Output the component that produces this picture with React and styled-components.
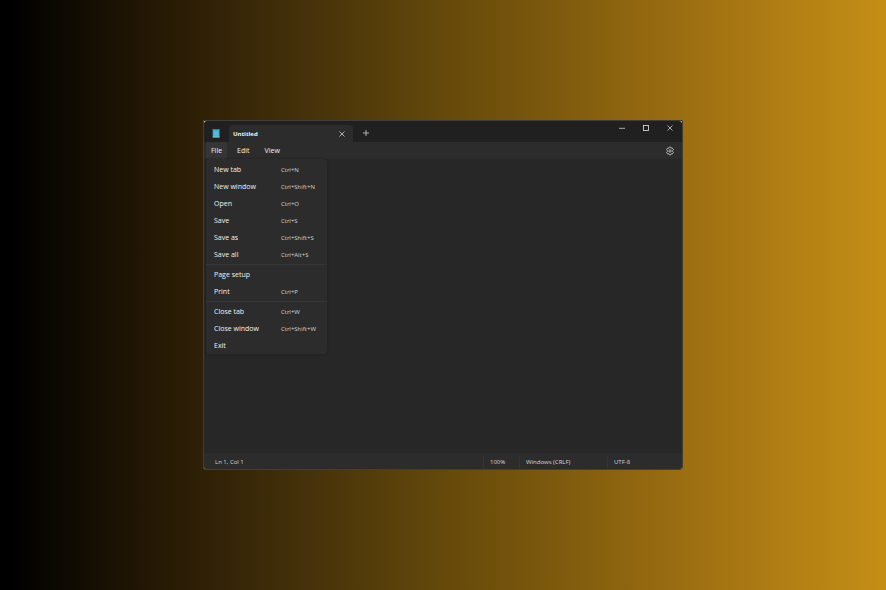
import React from 'react';
import styled, { createGlobalStyle } from 'styled-components';

const GlobalStyle = createGlobalStyle`
  * {
    box-sizing: border-box;
  }

  body {
    margin: 0;
    font-family: 'Open Sans', 'Noto Sans', sans-serif;
    color: #f2f2f2;
  }

  button {
    border: 0;
    padding: 0;
    background: none;
    color: inherit;
    font: inherit;
    cursor: pointer;
  }
`;

const Desktop = styled.div`
  display: flex;
  min-height: 100vh;
  padding: 120px 203px;
  background: linear-gradient(
    to right,
    #000 0%,
    #000 1%,
    #241804 17%,
    #46320a 35%,
    #64490a 50%,
    #845e0e 66%,
    #a57512 82%,
    #c48e16 100%
  );
`;

/* The light background only shows behind the rounded title bar corners */
const Window = styled.main`
  flex: 1;
  display: flex;
  flex-direction: column;
  min-width: 0;
  background-color: #c8c4ba;
  border: 1px solid #403e3a;
  border-radius: 0 0 3px 3px;
  overflow: hidden;
`;

const TitleBar = styled.header`
  display: flex;
  height: 21px;
  background-color: #202020;
  border-radius: 3px 3px 0 0;
`;

const AppIcon = styled.svg`
  flex-shrink: 0;
  width: 8px;
  height: 10px;
  margin: 7px 9px 0 8px;
`;

const Tab = styled.div`
  display: flex;
  align-items: center;
  justify-content: space-between;
  width: 124px;
  height: 17px;
  margin-top: 4px;
  padding: 0 7px 0 4px;
  background-color: #2c2c2c;
  border-radius: 4px 4px 0 0;
  font-size: 6px;
  font-weight: 700;
`;

const GlyphButton = styled.button`
  display: flex;
  align-items: center;
  justify-content: center;
  width: 8px;
  height: 8px;

  svg {
    width: 100%;
    height: 100%;
    fill: none;
    stroke: #d0d0d0;
  }
`;

const NewTabButton = styled(GlyphButton)`
  margin: 8px 0 0 9px;
`;

const WindowControls = styled.div`
  display: flex;
  gap: 16px;
  margin: 3px 8px 0 auto;
`;

const MenuBar = styled.nav`
  position: relative;
  display: flex;
  align-items: center;
  height: 17px;
  padding: 0 7px 0 2px;
  background-color: #2c2c2c;
`;

const MenuButton = styled.button`
  height: 17px;
  margin-right: 5px;
  padding: 1px 5px 0;
  border-radius: 2px;
  background-color: ${({ $open }) => ($open ? '#353535' : 'transparent')};
  font-size: 7px;
  line-height: 16px;
`;

const SettingsButton = styled(GlyphButton)`
  width: 10px;
  height: 10px;
  margin-left: auto;
`;

const Menu = styled.div`
  position: absolute;
  top: 17px;
  left: 2px;
  z-index: 1;
  width: 121px;
  padding-top: 2px;
  background-color: #2c2c2c;
  border-radius: 3px;
  box-shadow: 0 0 2px 1px rgba(0, 0, 0, 0.14);
`;

const MenuItem = styled.button`
  display: flex;
  align-items: center;
  width: 100%;
  height: 17px;
  padding-left: 8px;
  font-size: 7px;
  line-height: 17px;
  text-align: left;
`;

const ItemLabel = styled.span`
  width: 67px;
`;

const Shortcut = styled.span`
  padding-top: 1px;
  color: #d4d4d4;
  font-size: 6px;
  line-height: 16px;
`;

const Divider = styled.hr`
  height: 1px;
  margin: 1px 0;
  border: 0;
  background-color: #363636;
`;

const Editor = styled.textarea`
  flex: 1;
  width: 100%;
  padding: 8px;
  background-color: #272727;
  color: inherit;
  border: 0;
  outline: 0;
  resize: none;
`;

const StatusBar = styled.footer`
  display: flex;
  align-items: center;
  height: 16px;
  padding-top: 1px;
  background-color: #2c2c2c;
  color: #d8d8d8;
  font-size: 6px;
  line-height: 12px;
`;

const StatusItem = styled.span`
  flex: ${({ $width }) => ($width ? `0 0 ${$width}px` : '1')};
  padding-left: ${({ $width }) => ($width ? 6 : 10)}px;
  border-left: 1px solid ${({ $width }) => ($width ? '#343434' : 'transparent')};
`;

const fileMenu = [
  [
    { label: 'New tab', keys: 'Ctrl+N' },
    { label: 'New window', keys: 'Ctrl+Shift+N' },
    { label: 'Open', keys: 'Ctrl+O' },
    { label: 'Save', keys: 'Ctrl+S' },
    { label: 'Save as', keys: 'Ctrl+Shift+S' },
    { label: 'Save all', keys: 'Ctrl+Alt+S' },
  ],
  [{ label: 'Page setup' }, { label: 'Print', keys: 'Ctrl+P' }],
  [
    { label: 'Close tab', keys: 'Ctrl+W' },
    { label: 'Close window', keys: 'Ctrl+Shift+W' },
    { label: 'Exit' },
  ],
];

const CloseGlyph = () => (
  <svg viewBox="0 0 8 8">
    <path d="M1.5 1.5 6.5 6.5M6.5 1.5 1.5 6.5" strokeWidth="0.8" />
  </svg>
);

const NotepadIcon = () => (
  <AppIcon viewBox="0 0 8 10">
    <rect x="0.7" y="1" width="6.8" height="8.4" rx="0.5" fill="#42b4d6" />
    <rect x="0.7" y="1" width="6.8" height="1.2" fill="#2f87a6" />
    <path d="M1.8 4h4.6M1.8 5.5h4.6M1.8 7h4.6" stroke="#64cbe5" strokeWidth="0.6" />
    <rect x="0.7" y="8.6" width="6.8" height="0.8" fill="#8fc4d2" />
  </AppIcon>
);

const FileMenu = () => (
  <Menu>
    {fileMenu.map((group, index) => (
      <React.Fragment key={index}>
        {index > 0 && <Divider />}
        {group.map((item) => (
          <MenuItem key={item.label}>
            <ItemLabel>{item.label}</ItemLabel>
            {item.keys && <Shortcut>{item.keys}</Shortcut>}
          </MenuItem>
        ))}
      </React.Fragment>
    ))}
  </Menu>
);

const App = () => {
  return (
    <>
      <GlobalStyle />
      <Desktop>
        <Window>
          <TitleBar>
            <NotepadIcon />
            <Tab>
              <span>Untitled</span>
              <GlyphButton aria-label="Close tab">
                <CloseGlyph />
              </GlyphButton>
            </Tab>
            <NewTabButton aria-label="Add tab">
              <svg viewBox="0 0 8 8">
                <path d="M4 1V7M1 4H7" strokeWidth="0.8" />
              </svg>
            </NewTabButton>
            <WindowControls>
              <GlyphButton aria-label="Minimize">
                <svg viewBox="0 0 8 8">
                  <path d="M1 4.3H7" strokeWidth="0.8" />
                </svg>
              </GlyphButton>
              <GlyphButton aria-label="Maximize">
                <svg viewBox="0 0 8 8">
                  <rect x="1.5" y="1.5" width="5" height="5" strokeWidth="0.9" />
                </svg>
              </GlyphButton>
              <GlyphButton aria-label="Close">
                <CloseGlyph />
              </GlyphButton>
            </WindowControls>
          </TitleBar>
          <MenuBar>
            <MenuButton $open>File</MenuButton>
            <MenuButton>Edit</MenuButton>
            <MenuButton>View</MenuButton>
            <SettingsButton aria-label="Settings">
              <svg viewBox="0 0 10 10">
                <path
                  d="M4.1 1.2h1.8l0.4 1.1 1.2-0.2 0.9 1.6-0.8 0.9v0.8l0.8 0.9-0.9 1.6-1.2-0.2-0.4 1.1H4.1l-0.4-1.1-1.2 0.2-0.9-1.6 0.8-0.9v-0.8l-0.8-0.9 0.9-1.6 1.2 0.2z"
                  strokeWidth="0.8"
                />
                <circle cx="5" cy="5" r="1.2" strokeWidth="0.8" />
              </svg>
            </SettingsButton>
            <FileMenu />
          </MenuBar>
          <Editor aria-label="Text editor" />
          <StatusBar>
            <StatusItem>Ln 1, Col 1</StatusItem>
            <StatusItem $width={36}>100%</StatusItem>
            <StatusItem $width={88}>Windows (CRLF)</StatusItem>
            <StatusItem $width={75}>UTF-8</StatusItem>
          </StatusBar>
        </Window>
      </Desktop>
    </>
  );
};

export default App;
